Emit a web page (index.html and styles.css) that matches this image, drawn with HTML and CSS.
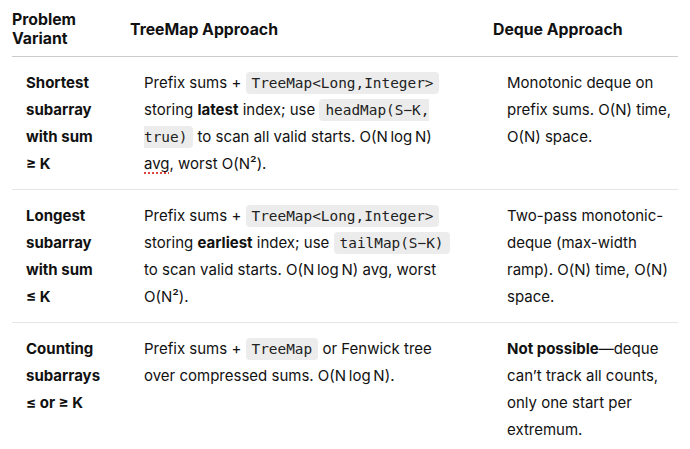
FILE: index.html
```html
<!DOCTYPE html>
<html>
<head>
<meta charset="utf-8">
<link rel="stylesheet" href="styles.css">
</head>
<body>
<table class="cmp">
  <colgroup><col class="c1"><col class="c2"><col class="c3"></colgroup>
  <thead>
    <tr><th>Problem Variant</th><th>TreeMap Approach</th><th>Deque Approach</th></tr>
  </thead>
  <tbody>
    <tr>
      <td class="variant">Shortest subarray with sum ≥&nbsp;K</td>
      <td class="tree">Prefix sums + <code>TreeMap&lt;Long,Integer&gt;</code> storing <b>latest</b> index; use <code>headMap(S−K, true)</code> to scan all valid starts. O(N&#8201;log&#8201;N) <span class="spell">avg</span>, worst O(N²).</td>
      <td class="deque">Monotonic deque on prefix sums. O(N) time, O(N) space.</td>
    </tr>
    <tr>
      <td class="variant">Longest subarray with sum ≤&nbsp;K</td>
      <td class="tree">Prefix sums + <code>TreeMap&lt;Long,Integer&gt;</code> storing <b>earliest</b> index; use <code>tailMap(S−K)</code> to scan valid starts. O(N&#8201;log&#8201;N) avg, worst O(N²).</td>
      <td class="deque">Two-pass monotonic-deque (max-width ramp). O(N) time, O(N) space.</td>
    </tr>
    <tr>
      <td class="variant">Counting subarrays ≤ or ≥&nbsp;K</td>
      <td class="tree">Prefix sums + <code>TreeMap</code> or Fenwick tree over compressed sums. O(N&#8201;log&#8201;N).</td>
      <td class="deque"><b>Not possible</b>—deque can’t track all counts, only one start per extremum.</td>
    </tr>
  </tbody>
</table>
</body>
</html>
```
FILE: styles.css
```css
html, body {
  margin: 0;
  padding: 0;
  background: #ffffff;
}
body {
  font-family: Inter, "Noto Sans", sans-serif;
  color: #111111;
}
.cmp {
  margin-left: 12px;
  width: 666px;
  border-collapse: collapse;
  table-layout: fixed;
  font-size: 15px;
}
.c1 { width: 118px; }
.c2 { width: 363px; }
.c3 { width: 185px; }
th {
  text-align: left;
  font-weight: 700;
  font-size: 15.8px;
  line-height: 19px;
  padding: 10px 16px 8px 0;
  vertical-align: middle;
  border-bottom: 1px solid #cccccc;
}
td {
  vertical-align: top;
  line-height: 27px;
  padding: 12px 20px 12px 14px;
  border-bottom: 1px solid #e6e6e6;
}
tbody tr:last-child td { border-bottom: none; }
td.variant { font-weight: 700; padding-right: 22px; }
td.tree { padding-right: 34px; }
td.deque { padding-right: 4px; }
b { font-weight: 700; }
code {
  font-family: "DejaVu Sans Mono", "Liberation Mono", monospace;
  font-size: 14.4px;
  line-height: 1;
  background: #ececec;
  border-radius: 4px;
  padding: 3px 6px;
  color: #222222;
}
.spell {
  text-decoration: underline dotted #e0443e;
  text-decoration-thickness: 1.5px;
  text-underline-offset: 3px;
}
```
